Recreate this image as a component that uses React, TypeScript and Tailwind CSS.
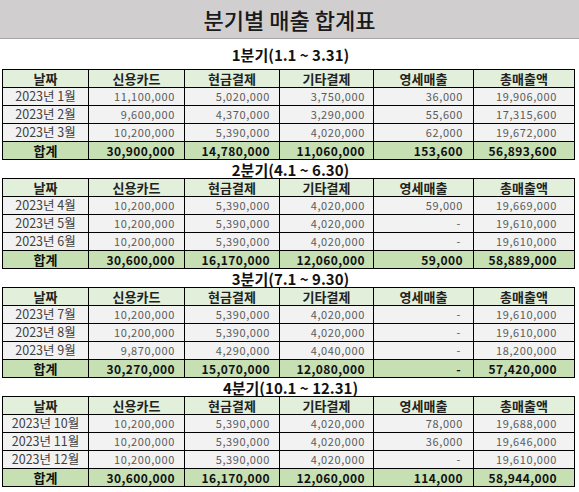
import React from "react";

type Row = { label: string; v: string[] };
type Quarter = { title: string; rows: Row[]; total: string[] };

const quarters: Quarter[] = [
  {
    title: "1분기(1.1 ~ 3.31)",
    rows: [
      { label: "2023년 1월", v: ["11,100,000", "5,020,000", "3,750,000", "36,000", "19,906,000"] },
      { label: "2023년 2월", v: ["9,600,000", "4,370,000", "3,290,000", "55,600", "17,315,600"] },
      { label: "2023년 3월", v: ["10,200,000", "5,390,000", "4,020,000", "62,000", "19,672,000"] },
    ],
    total: ["30,900,000", "14,780,000", "11,060,000", "153,600", "56,893,600"],
  },
  {
    title: "2분기(4.1 ~ 6.30)",
    rows: [
      { label: "2023년 4월", v: ["10,200,000", "5,390,000", "4,020,000", "59,000", "19,669,000"] },
      { label: "2023년 5월", v: ["10,200,000", "5,390,000", "4,020,000", "-", "19,610,000"] },
      { label: "2023년 6월", v: ["10,200,000", "5,390,000", "4,020,000", "-", "19,610,000"] },
    ],
    total: ["30,600,000", "16,170,000", "12,060,000", "59,000", "58,889,000"],
  },
  {
    title: "3분기(7.1 ~ 9.30)",
    rows: [
      { label: "2023년 7월", v: ["10,200,000", "5,390,000", "4,020,000", "-", "19,610,000"] },
      { label: "2023년 8월", v: ["10,200,000", "5,390,000", "4,020,000", "-", "19,610,000"] },
      { label: "2023년 9월", v: ["9,870,000", "4,290,000", "4,040,000", "-", "18,200,000"] },
    ],
    total: ["30,270,000", "15,070,000", "12,080,000", "-", "57,420,000"],
  },
  {
    title: "4분기(10.1 ~ 12.31)",
    rows: [
      { label: "2023년 10월", v: ["10,200,000", "5,390,000", "4,020,000", "78,000", "19,688,000"] },
      { label: "2023년 11월", v: ["10,200,000", "5,390,000", "4,020,000", "36,000", "19,646,000"] },
      { label: "2023년 12월", v: ["10,200,000", "5,390,000", "4,020,000", "-", "19,610,000"] },
    ],
    total: ["30,600,000", "16,170,000", "12,060,000", "114,000", "58,944,000"],
  },
];

const headers = ["날짜", "신용카드", "현금결제", "기타결제", "영세매출", "총매출액"];
const pads = ["pr-[9px]", "pr-[9px]", "pr-[8px]", "pr-[10px]", "pr-[17px]"];

function NumCell({ value, idx, bold }: { value: string; idx: number; bold?: boolean }) {
  const dash = value === "-";
  return (
    <div
      className={`h-[18px] border-r border-b border-black flex items-center justify-end ${
        dash ? "pr-[12px]" : pads[idx]
      } ${bold ? "text-[12px] font-bold text-[#111] tracking-[0.4px]" : "text-[11px] text-[#5a5a5a] tracking-[0.6px]"}`}
    >
      {value}
    </div>
  );
}

function QuarterTable({ q }: { q: Quarter }) {
  return (
    <div className="grid grid-cols-[86px_96px_95px_94px_100px_101px] border-l border-t border-black w-[573px] leading-none">
      {headers.map((h) => (
        <div
          key={h}
          className="h-[18px] bg-[#e2efda] border-r border-b border-black flex items-center justify-center text-[13px] font-bold text-[#222]"
        >
          {h}
        </div>
      ))}
      {q.rows.map((r) => (
        <React.Fragment key={r.label}>
          <div className="h-[18px] bg-[#f2f2f2] border-r border-b border-black flex items-center justify-center text-[12.5px] text-[#404040]">
            {r.label}
          </div>
          {r.v.map((v, i) => (
            <div key={i} className="bg-[#f2f2f2]">
              <NumCell value={v} idx={i} />
            </div>
          ))}
        </React.Fragment>
      ))}
      <div className="h-[18px] bg-[#c6e0b4] border-r border-b border-black flex items-center justify-center text-[13px] font-bold text-[#111]">
        합계
      </div>
      {q.total.map((v, i) => (
        <div key={i} className="bg-[#c6e0b4]">
          <NumCell value={v} idx={i} bold />
        </div>
      ))}
    </div>
  );
}

export default function App() {
  return (
    <div
      className="w-[579px] h-[492px] bg-white overflow-hidden"
      style={{ fontFamily: '"Noto Sans CJK KR", "Noto Sans", sans-serif' }}
    >
      <div className="h-[39px] bg-[#d0cece] border-b border-[#a6a6a6] flex items-center justify-center text-[22px] font-medium text-[#1a1a1a] leading-none">
        분기별 매출 합계표
      </div>
      <div className="pl-[2px]">
        {quarters.map((q, i) => (
          <div key={q.title}>
            <div
              className={`${i === 0 ? "h-[30px]" : "h-[18px]"} flex items-center justify-center text-[15px] font-bold text-[#111] leading-none`}
            >
              {q.title}
            </div>
            <QuarterTable q={q} />
          </div>
        ))}
      </div>
    </div>
  );
}
